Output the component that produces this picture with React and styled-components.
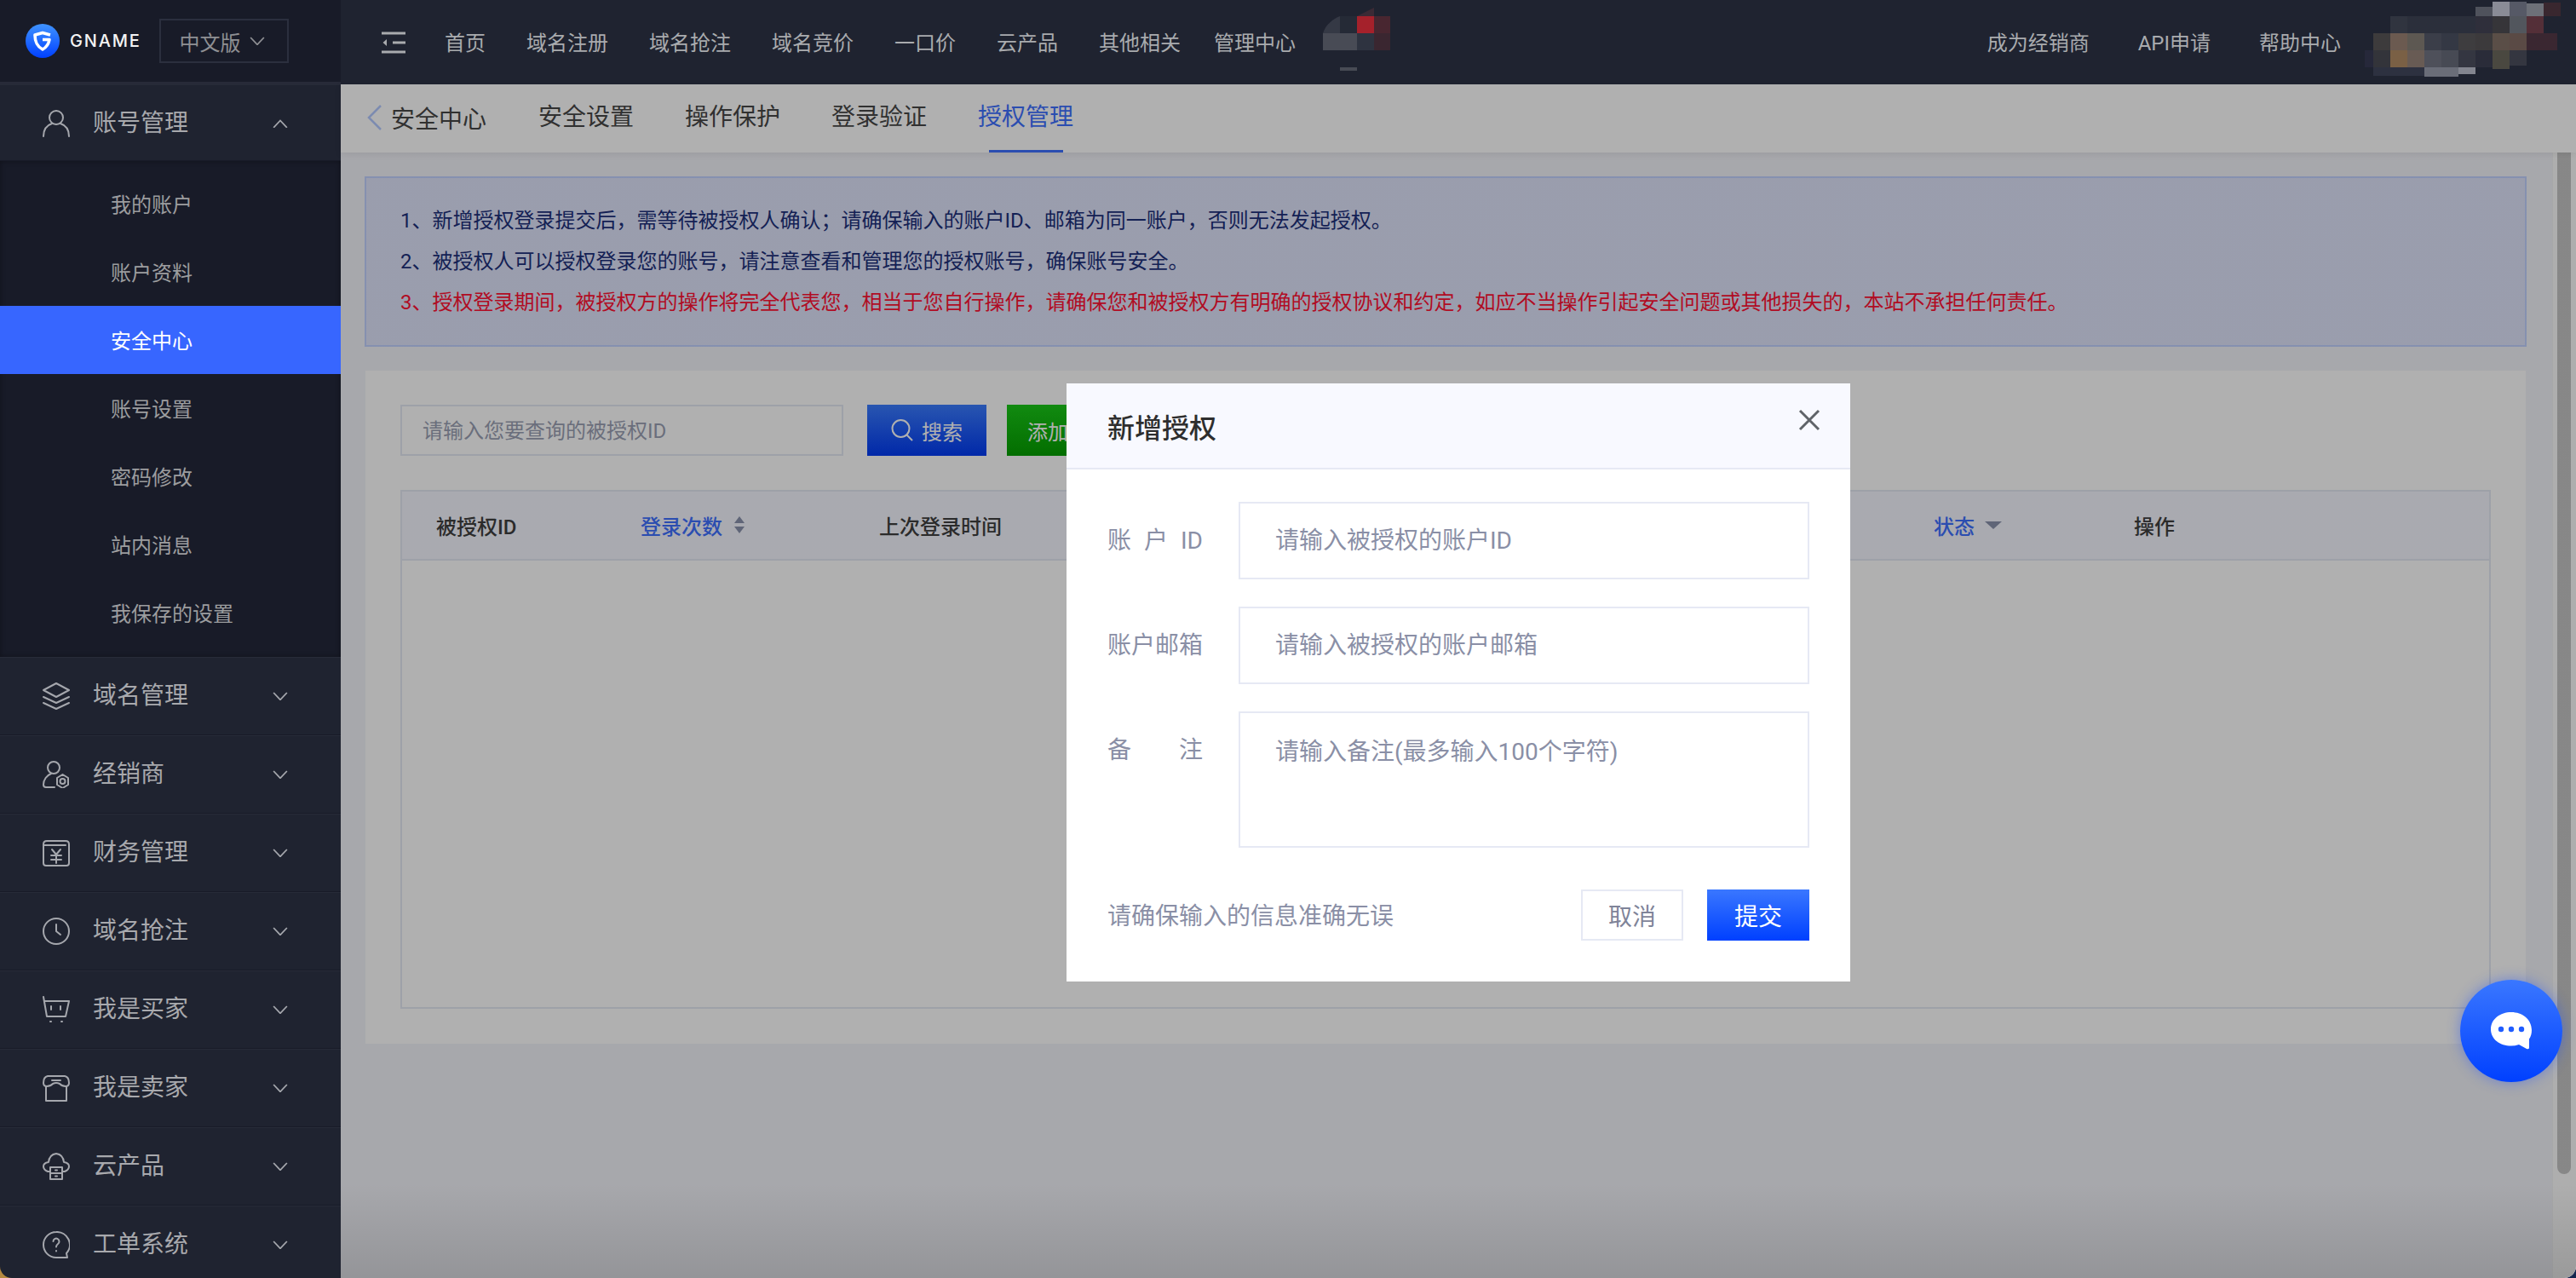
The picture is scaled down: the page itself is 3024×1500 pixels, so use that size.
import styled, { createGlobalStyle } from "styled-components";

const GlobalStyle = createGlobalStyle`
  html, body {
    margin: 0;
    padding: 0;
    height: 100%;
    overflow: hidden;
    background: linear-gradient(to right, #b5893f 50%, #14264e 50%);
  }
  * {
    box-sizing: border-box;
  }
  #root {
    height: 100%;
  }
`;

const Page = styled.div`
  display: flex;
  width: 100%;
  height: 100vh;
  overflow: hidden;
  border-radius: 0 0 14px 14px;
  font-family: Roboto, "Noto Sans CJK SC", sans-serif;
  font-size: 24px;
`;

/* left menu */
const Sidebar = styled.aside`
  flex: 0 0 400px;
  height: 100%;
  overflow: hidden;
  background: #1f2330;
  color: #a8a9ad;
`;

const LogoBar = styled.div`
  display: flex;
  align-items: center;
  height: 99px;
  padding-left: 30px;
  background: #181b28;
  border-bottom: 3px solid #272a38;
`;

const LogoText = styled.span`
  margin-left: 12px;
  font-family: Inter, sans-serif;
  font-size: 20px;
  font-weight: 500;
  letter-spacing: 1.8px;
  color: #f4f4f4;
`;

const LangSelect = styled.div`
  display: flex;
  align-items: center;
  gap: 10px;
  width: 152px;
  height: 52px;
  margin-left: 21px;
  padding-left: 22px;
  border: 2px solid #2b2f3e;
  color: #8e8f93;
`;

const GroupRow = styled.div`
  display: flex;
  align-items: center;
  height: ${(p) => (p.$open ? "90px" : "92px")};
  padding: ${(p) => (p.$open ? "2px" : "0")} 62px 0 50px;
  font-size: 28px;
  border-top: 1px solid #272b38;
  border-bottom: 1px solid #181b28;
`;

const GroupIcon = styled.svg`
  flex: 0 0 32px;
  width: 32px;
  height: 32px;
  fill: none;
  stroke: #a5a7ad;
  stroke-width: 2;
  stroke-linecap: round;
  stroke-linejoin: round;
`;

const GroupLabel = styled.span`
  flex: 1;
  margin-left: 27px;
  line-height: 32px;
`;

const SubMenu = styled.div`
  padding: 10px 0 12px;
  background: #181b28;
  box-shadow: inset 0 0 6px rgba(0, 0, 0, 0.35);
`;

const SubItem = styled.div`
  height: 80px;
  padding-left: 130px;
  line-height: 84px;
  color: ${(p) => (p.$active ? "#ffffff" : "#9c9d9f")};
  background: ${(p) => (p.$active ? "#3766ff" : "transparent")};
`;

/* right side */
const Main = styled.div`
  position: relative;
  flex: 1;
  display: flex;
  flex-direction: column;
  min-width: 0;
`;

const TopBar = styled.header`
  flex: 0 0 99px;
  display: flex;
  align-items: center;
  padding-left: 48px;
  background: #1f2330;
  color: #a9abae;
`;

const MenuToggle = styled.svg`
  width: 28px;
  height: 26px;
  margin-right: 46px;
  fill: none;
  stroke: #a9abae;
  stroke-width: 3;
`;

const NavLink = styled.a`
  margin: 0 48px 2px 0;
  white-space: nowrap;
  &:nth-of-type(7) {
    margin-right: 39px;
  }
  &:nth-of-type(8) {
    margin-right: 0;
  }
`;

const BlurBlock = styled.svg`
  flex: none;
  display: block;
  margin-left: ${(p) => p.$gap}px;
`;

const TopRight = styled.div`
  display: flex;
  align-items: center;
  gap: 57px;
  margin: 0 12px 2px auto;
`;

const TabBar = styled.nav`
  flex: 0 0 80px;
  display: flex;
  align-items: center;
  gap: 60px;
  padding-left: 31px;
  background: #ffffff;
  font-size: 28px;
  color: #464646;
  box-shadow: 0 2px 8px rgba(0, 0, 0, 0.08);
  z-index: 1;
`;

const BackTab = styled.div`
  display: flex;
  align-items: center;
  gap: 10px;
  margin-right: 1px;
  margin-bottom: 2px;
`;

const Tab = styled.a`
  position: relative;
  height: 80px;
  line-height: 78px;
  color: ${(p) => (p.$active ? "#3e70ff" : "inherit")};

  ${(p) =>
    p.$active &&
    `&::after {
      content: "";
      position: absolute;
      left: 13px;
      right: 12px;
      bottom: 0;
      height: 3px;
      background: #3e70ff;
    }`}
`;

const Body = styled.div`
  flex: 1;
  display: flex;
  min-height: 0;
  background: #f2f3f9;
`;

const Content = styled.div`
  flex: 1;
  padding: 28px 30px 0 28px;
  min-width: 0;
`;

const ScrollTrack = styled.div`
  flex: 0 0 28px;
  padding-left: 5px;
  background: #fcfcfc;
  border-left: 1px solid #f2f3f3;
`;

const ScrollThumb = styled.div`
  width: 16px;
  height: 1199px;
  border-radius: 0 0 8px 8px;
  background: #c4c4c4;
`;

const Notice = styled.div`
  height: 200px;
  padding: 26px 0 0 40px;
  border: 2px solid #c1d1ff;
  background: #dfe4fb;
  color: #1c2f7a;
  line-height: 48px;
`;

const NoticeLine = styled.div`
  white-space: nowrap;
  color: ${(p) => (p.$danger ? "#ff1133" : "inherit")};
`;

const Card = styled.section`
  height: 790px;
  margin: 28px 1px 0;
  padding: 40px 41px;
  background: #ffffff;
`;

const Toolbar = styled.div`
  display: flex;
  margin-bottom: 40px;
`;

const SearchInput = styled.input`
  width: 520px;
  height: 60px;
  padding: 2px 24px 0;
  border: 2px solid #e4e9f3;
  outline: none;
  background: #ffffff;
  font: inherit;
  &::placeholder {
    color: #9a9fb3;
  }
`;

const ActionButton = styled.button`
  display: flex;
  align-items: center;
  justify-content: center;
  gap: 10px;
  width: ${(p) => p.$width}px;
  height: 60px;
  margin-left: ${(p) => p.$gap}px;
  border: 0;
  font: inherit;
  color: #ffffff;
  background: ${(p) => p.$bg};
`;

const Table = styled.div`
  height: 609px;
  border: 2px solid #e4e9f3;
`;

const TableHead = styled.div`
  display: grid;
  grid-template-columns: 240px 280px 1238px 235px 1fr;
  height: 81px;
  border-bottom: 2px solid #e4e9f3;
  background: #f5f6ff;
`;

const HeadCell = styled.div`
  display: flex;
  align-items: center;
  gap: 12px;
  padding: 0 0 1px 40px;
  font-weight: 500;
  color: ${(p) => (p.$link ? "#3e70ff" : "#3e3e3e")};
`;

/* dialog */
const Overlay = styled.div`
  position: absolute;
  inset: 99px 0 0 0;
  display: flex;
  align-items: center;
  justify-content: center;
  padding-top: 3px;
  background: linear-gradient(
    rgba(0, 0, 0, 0.31) calc(100% - 110px),
    rgba(0, 0, 0, 0.39)
  );
  z-index: 2;
`;

const Dialog = styled.div`
  width: 920px;
  height: 702px;
  background: #ffffff;
`;

const DialogHead = styled.div`
  display: flex;
  align-items: center;
  justify-content: space-between;
  height: 101px;
  padding: 0 48px;
  border-bottom: 2px solid #e6e9f4;
  background: #f8f9ff;
`;

const DialogTitle = styled.h3`
  margin: 0;
  font-size: 32px;
  font-weight: 500;
  color: #2e2e2e;
`;

const CloseIcon = styled.svg`
  width: 26px;
  height: 26px;
  margin: -14px -13px 0 0;
  fill: none;
  stroke: #5f6368;
  stroke-width: 3;
`;

const DialogForm = styled.div`
  display: flex;
  flex-direction: column;
  gap: 32px;
  padding: 38px 48px 0;
  font-size: 28px;
  color: #8a8fa6;
`;

const Field = styled.label`
  display: flex;
  align-items: flex-start;
  justify-content: space-between;
`;

const FieldName = styled.span`
  display: flex;
  justify-content: space-between;
  width: 112px;
  height: 91px;
  line-height: 92px;
`;

const TextInput = styled.input`
  width: 670px;
  height: 91px;
  padding: 0 41px;
  border: 2px solid #e6e9f4;
  outline: none;
  font: inherit;
  &::placeholder {
    color: #8a8fa6;
  }
`;

const TextArea = styled.textarea`
  display: block;
  width: 670px;
  height: 160px;
  padding: 25px 41px;
  border: 2px solid #e6e9f4;
  outline: none;
  resize: none;
  font: inherit;
  line-height: 42px;
  &::placeholder {
    color: #8a8fa6;
  }
`;

const DialogFoot = styled.div`
  display: flex;
  align-items: center;
  gap: 28px;
  margin-top: 17px;
`;

const Hint = styled.span`
  flex: 1;
  padding-bottom: 3px;
`;

const CancelButton = styled.button`
  width: 120px;
  height: 60px;
  border: 2px solid #e6e9f4;
  background: #ffffff;
  font: inherit;
  color: #7f8499;
`;

const SubmitButton = styled.button`
  width: 120px;
  height: 60px;
  border: 0;
  background: linear-gradient(#3a77ff, #0040ff);
  font: inherit;
  color: #ffffff;
`;

const ChatButton = styled.div`
  position: fixed;
  right: 16px;
  bottom: 230px;
  display: flex;
  align-items: center;
  justify-content: center;
  width: 120px;
  height: 120px;
  border-radius: 50%;
  background: linear-gradient(#3a77ff, #0040ff);
  box-shadow: 0 0 16px rgba(30, 80, 255, 0.45);
  z-index: 3;
`;

const Chevron = ({ up, color = "#a5a7ad", size = 18 }) => (
  <svg width={size} height={size * 0.6} viewBox="0 0 18 11" fill="none" stroke={color} strokeWidth="1.8">
    <path d={up ? "M1 10 9 1.5 17 10" : "M1 1 9 9.5 17 1"} />
  </svg>
);

const Logo = () => (
  <svg width="40" height="40" viewBox="0 0 40 40">
    <defs>
      <linearGradient id="logoFill" x1="0" y1="0" x2="0" y2="1">
        <stop offset="0" stopColor="#3f93ff" />
        <stop offset="1" stopColor="#0040ff" />
      </linearGradient>
    </defs>
    <circle cx="20" cy="20" r="20" fill="url(#logoFill)" />
    <path
      d="M29 13 20 10.500 11 13c0 8 2 13 9 17 4.500-2.500 7-6 8-11.500h-8"
      fill="none"
      stroke="#ffffff"
      strokeWidth="3.6"
      strokeLinejoin="round"
    />
  </svg>
);

const icons = {
  user: (
    <>
      <circle cx="16" cy="9" r="8" />
      <path d="M1 31c0-8 4-13 10-15M31 31c0-8-4-13-10-15" />
    </>
  ),
  layers: (
    <>
      <path d="M16 1 31 9 16 17 1 9Z" />
      <path d="M1 17 16 24 31 17M1 24 16 31 31 24" />
    </>
  ),
  dealer: (
    <>
      <circle cx="13" cy="8" r="7" />
      <path d="M14 31H4c-2 0-3-1-3-3 0-6 4-11 9-13" />
      <path d="M23.5 16l6.5 4v8l-6.5 4-6.5-4v-8Z" />
      <circle cx="23.5" cy="24" r="3" />
    </>
  ),
  wallet: (
    <>
      <path d="M1 6q0-4 4-4h22q4 0 4 4v22q0 3-3 3H4q-3 0-3-3Z" />
      <path d="M2 7h25" />
      <path d="M11 12l5 6 5-6M10 19h12M10 24h12M16 18v10" />
    </>
  ),
  clock: (
    <>
      <circle cx="16" cy="16" r="15" />
      <path d="M16 8v8l5 4" />
    </>
  ),
  cart: (
    <>
      <path d="M1 1l4 23h22l4-18H3" />
      <path d="M10 12v4M21 12v4M9 30h1M22 30h1" />
    </>
  ),
  shop: (
    <>
      <path d="M6 2h20q5 1 5 8 0 4-4 4-4 0-7-3-4-2-8 0-3 3-7 3-4 0-4-4 0-7 5-8Z" />
      <path d="M11 7h10M4 14v17h24V14" />
    </>
  ),
  cloud: (
    <>
      <path d="M8 22H6q-5-2-5-6 0-4 6-5 1-9 9-10 8 1 9 10 6 1 6 5 0 4-5 6h-2" />
      <path d="M9 17h14v14H9ZM9 24h14M15 20.500h2M15 27.500h2" />
    </>
  ),
  ticket: (
    <>
      <path d="M16 1a15 15 0 1 0 0 30h13l-1-5a15 15 0 0 0-12-25Z" />
      <path d="M12.500 12a3.500 3.500 0 1 1 5.500 3c-1.500 1-2 1.500-2 3.500M16 23v.5" />
    </>
  ),
};

const Group = ({ icon, label, open }) => (
  <GroupRow $open={open}>
    <GroupIcon viewBox="0 0 32 32">{icons[icon]}</GroupIcon>
    <GroupLabel>{label}</GroupLabel>
    <Chevron up={open} />
  </GroupRow>
);

// pixelated patches in the top bar
const patchA = [
  [20, 19, 20, 20, "#252a36"],
  [40, 19, 20, 20, "#a5212b"],
  [60, 19, 19, 20, "#482630"],
  [0, 39, 40, 20, "#484b55"],
  [40, 39, 20, 20, "#2e3340"],
  [60, 39, 19, 20, "#3a2630"],
  [20, 79, 20, 4, "#484b55"],
];

const patchB = [
  [46, 19, 20, 20, "#30343f"],
  [66, 19, 80, 20, "#2b2f3b"],
  [146, 19, 20, 20, "#2f2f3b"],
  [166, 19, 20, 20, "#363539"],
  [186, 19, 20, 20, "#52565d"],
  [206, 19, 20, 20, "#542f38"],
  [146, 8, 20, 11, "#4f525c"],
  [166, 2, 20, 17, "#8a8c96"],
  [186, 2, 20, 17, "#565966"],
  [206, 4, 20, 15, "#6d7078"],
  [226, 3, 20, 16, "#39272f"],
  [26, 39, 20, 20, "#3d3b3c"],
  [46, 39, 20, 20, "#6b5a50"],
  [66, 39, 20, 20, "#5d5852"],
  [86, 39, 20, 20, "#3b3e49"],
  [106, 39, 20, 20, "#343844"],
  [126, 39, 20, 20, "#3e3d3f"],
  [146, 39, 20, 20, "#3c3a3c"],
  [166, 39, 20, 20, "#5a4e47"],
  [186, 39, 20, 20, "#5a4a45"],
  [206, 39, 36, 20, "#3a2731"],
  [16, 59, 10, 20, "#26283a"],
  [26, 59, 20, 20, "#33343a"],
  [46, 59, 20, 20, "#7a6045"],
  [66, 59, 20, 20, "#685b54"],
  [86, 59, 20, 20, "#4e505a"],
  [106, 59, 20, 20, "#474a54"],
  [126, 59, 20, 20, "#343641"],
  [146, 59, 20, 20, "#2a2c39"],
  [166, 59, 20, 22, "#4a4840"],
  [186, 59, 20, 18, "#343640"],
  [26, 79, 60, 10, "#2d3140"],
  [86, 79, 40, 11, "#6a6d78"],
  [126, 79, 20, 8, "#83858f"],
];

const Patch = ({ cells, width, gap, children }) => (
  <BlurBlock width={width} height="99" viewBox={`0 0 ${width} 99`} $gap={gap}>
    {children}
    {cells.map(([x, y, w, h, c]) => (
      <rect key={`${x}-${y}`} x={x} y={y} width={w} height={h} fill={c} />
    ))}
  </BlurBlock>
);

const App = () => {
  return (
    <Page>
      <GlobalStyle />
      <Sidebar>
        <LogoBar>
          <Logo />
          <LogoText>GNAME</LogoText>
          <LangSelect>
            中文版
            <Chevron color="#8e8f93" />
          </LangSelect>
        </LogoBar>
        <Group icon="user" label="账号管理" open />
        <SubMenu>
          <SubItem>我的账户</SubItem>
          <SubItem>账户资料</SubItem>
          <SubItem $active>安全中心</SubItem>
          <SubItem>账号设置</SubItem>
          <SubItem>密码修改</SubItem>
          <SubItem>站内消息</SubItem>
          <SubItem>我保存的设置</SubItem>
        </SubMenu>
        <Group icon="layers" label="域名管理" />
        <Group icon="dealer" label="经销商" />
        <Group icon="wallet" label="财务管理" />
        <Group icon="clock" label="域名抢注" />
        <Group icon="cart" label="我是买家" />
        <Group icon="shop" label="我是卖家" />
        <Group icon="cloud" label="云产品" />
        <Group icon="ticket" label="工单系统" />
      </Sidebar>

      <Main>
        <TopBar>
          <MenuToggle viewBox="0 0 28 26">
            <path d="M0 2h28M13 13h15M0 24h28" />
            <path d="M6 9 1.500 13 6 17Z" fill="#a9abae" stroke="none" />
          </MenuToggle>
          <NavLink>首页</NavLink>
          <NavLink>域名注册</NavLink>
          <NavLink>域名抢注</NavLink>
          <NavLink>域名竞价</NavLink>
          <NavLink>一口价</NavLink>
          <NavLink>云产品</NavLink>
          <NavLink>其他相关</NavLink>
          <NavLink>管理中心</NavLink>
          <Patch cells={patchA} width={80} gap={32}>
            <path d="M0 39C3 29 12 22 20 19V39Z" fill="#353945" />
            <path d="M40 19 60 9V19Z" fill="#3b2a35" />
          </Patch>
          <TopRight>
            <span>成为经销商</span>
            <span>API申请</span>
            <span>帮助中心</span>
          </TopRight>
          <Patch cells={patchB} width={264} gap={0} />
        </TopBar>

        <TabBar>
          <BackTab>
            <svg width="18" height="30" viewBox="0 0 18 30" fill="none" stroke="#b4c9ff" strokeWidth="2.500">
              <path d="M16 1 2 15l14 14" />
            </svg>
            <span>安全中心</span>
          </BackTab>
          <Tab>安全设置</Tab>
          <Tab>操作保护</Tab>
          <Tab>登录验证</Tab>
          <Tab $active>授权管理</Tab>
        </TabBar>

        <Body>
          <Content>
            <Notice>
              <NoticeLine>
                1、新增授权登录提交后，需等待被授权人确认；请确保输入的账户ID、邮箱为同一账户，否则无法发起授权。
              </NoticeLine>
              <NoticeLine>2、被授权人可以授权登录您的账号，请注意查看和管理您的授权账号，确保账号安全。</NoticeLine>
              <NoticeLine $danger>
                3、授权登录期间，被授权方的操作将完全代表您，相当于您自行操作，请确保您和被授权方有明确的授权协议和约定，如应不当操作引起安全问题或其他损失的，本站不承担任何责任。
              </NoticeLine>
            </Notice>
            <Card>
              <Toolbar>
                <SearchInput placeholder="请输入您要查询的被授权ID" />
                <ActionButton $width={140} $gap={28} $bg="linear-gradient(#3b7cff, #003af4)">
                  <svg width="26" height="26" viewBox="0 0 26 26" fill="none" stroke="#ffffff" strokeWidth="2">
                    <circle cx="11.500" cy="11" r="10" />
                    <path d="M18.500 18.500 25 25" />
                  </svg>
                  搜索
                </ActionButton>
                <ActionButton $width={144} $gap={24} $bg="linear-gradient(#19c817, #049f00)">
                  添加授权
                </ActionButton>
              </Toolbar>
              <Table>
                <TableHead>
                  <HeadCell>被授权ID</HeadCell>
                  <HeadCell $link>
                    登录次数
                    <svg width="16" height="20" viewBox="0 0 16 20" fill="#8a92ad">
                      <path d="M8 0l6 8H2ZM8 20l-6-8h12Z" />
                    </svg>
                  </HeadCell>
                  <HeadCell>上次登录时间</HeadCell>
                  <HeadCell $link>
                    状态
                    <svg width="20" height="9" viewBox="0 0 20 9" fill="#8a92ad">
                      <path d="M0 0h20L10 9Z" />
                    </svg>
                  </HeadCell>
                  <HeadCell>操作</HeadCell>
                </TableHead>
              </Table>
            </Card>
          </Content>
          <ScrollTrack>
            <ScrollThumb />
          </ScrollTrack>
        </Body>

        <Overlay>
          <Dialog>
            <DialogHead>
              <DialogTitle>新增授权</DialogTitle>
              <CloseIcon viewBox="0 0 26 26">
                <path d="M2 2l22 22M24 2 2 24" />
              </CloseIcon>
            </DialogHead>
            <DialogForm>
              <Field>
                <FieldName>
                  <span>账</span>
                  <span>户</span>
                  <span>ID</span>
                </FieldName>
                <TextInput placeholder="请输入被授权的账户ID" />
              </Field>
              <Field>
                <FieldName>账户邮箱</FieldName>
                <TextInput placeholder="请输入被授权的账户邮箱" />
              </Field>
              <Field>
                <FieldName>
                  <span>备</span>
                  <span>注</span>
                </FieldName>
                <TextArea placeholder="请输入备注(最多输入100个字符)" />
              </Field>
              <DialogFoot>
                <Hint>请确保输入的信息准确无误</Hint>
                <CancelButton>取消</CancelButton>
                <SubmitButton>提交</SubmitButton>
              </DialogFoot>
            </DialogForm>
          </Dialog>
        </Overlay>
      </Main>

      <ChatButton>
        <svg width="50" height="50" viewBox="0 0 50 50">
          <path
            d="M25 3c13 0 24 8.500 24 21 0 4-1 7.500-3 10.500V45q-.500 2-3 1l-9-5c-3 1-6 1.500-9 1.500C12 42.500 1 35 1 23 1 11 12 3 25 3Z"
            fill="#ffffff"
          />
          <g fill="#1f5cff">
            <circle cx="13" cy="23" r="3.200" />
            <circle cx="25" cy="23" r="3.200" />
            <circle cx="37" cy="23" r="3.200" />
          </g>
        </svg>
      </ChatButton>
    </Page>
  );
};

export default App;
